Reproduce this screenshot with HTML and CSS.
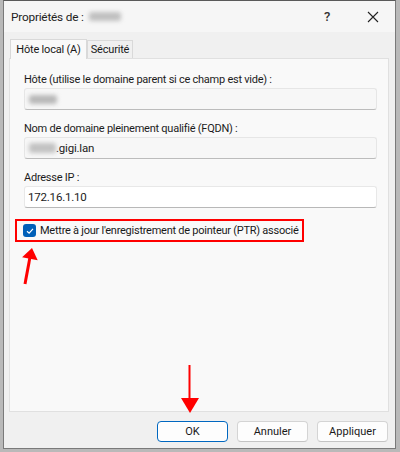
FILE: index.html
```html
<!DOCTYPE html>
<html lang="fr">
<head>
<meta charset="utf-8">
<link rel="stylesheet" href="styles.css">
</head>
<body>
<div class="window">
  <div class="titlebar">
    <span class="title">Propriétés de :</span><span class="blur blur-title"></span>
    <span class="spacer"></span>
    <span class="tbtn help">?</span>
    <span class="tbtn close"><svg width="12" height="12" viewBox="0 0 12 12"><path d="M1 1L11 11M11 1L1 11" stroke="#222" stroke-width="1.1"/></svg></span>
  </div>
  <div class="tabs">
    <div class="tab active">Hôte local (A)</div>
    <div class="tab">Sécurité</div>
  </div>
  <div class="panel">
    <div class="field">
      <div class="label">Hôte (utilise le domaine parent si ce champ est vide) :</div>
      <div class="input"><span class="blur blur-host"></span></div>
    </div>
    <div class="field">
      <div class="label">Nom de domaine pleinement qualifié (FQDN) :</div>
      <div class="input"><span class="blur blur-fqdn"></span><span>.gigi.lan</span></div>
    </div>
    <div class="field">
      <div class="label">Adresse IP :</div>
      <div class="input input-white"><span>172.16.1.10</span></div>
    </div>
    <div class="check-row">
      <span class="checkbox"><svg width="10" height="10" viewBox="0 0 10 10"><path d="M2 5.2L4.1 7.2L8 2.8" fill="none" stroke="#fff" stroke-width="1.2"/></svg></span>
      <span class="check-label">Mettre à jour l'enregistrement de pointeur (PTR) associé</span>
    </div>
    <svg class="arrow-up" width="30" height="45" viewBox="0 0 30 45"><path d="M7 39L12 12" stroke="#f00" stroke-width="3" fill="none"/><path d="M14 3L4.1 12.3L19.7 15.3Z" fill="#f00"/></svg>
    <svg class="arrow-down" width="20" height="50" viewBox="0 0 20 50"><path d="M9.5 0L9.5 34" stroke="#f00" stroke-width="2"/><path d="M1 33L19 33L10 48Z" fill="#f00"/></svg>
  </div>
  <div class="buttons">
    <div class="btn default">OK</div>
    <div class="btn">Annuler</div>
    <div class="btn">Appliquer</div>
  </div>
</div>
</body>
</html>
```

FILE: styles.css
```css
html, body {
  margin: 0;
  padding: 0;
}
body {
  width: 400px;
  height: 452px;
  background: #b9b9b9;
  font-family: Roboto, "Liberation Sans", sans-serif;
  font-size: 11px;
  color: #1a1a1a;
  overflow: hidden;
}
.window {
  box-sizing: border-box;
  width: 393px;
  height: 449px;
  margin: 0 4px 0 3px;
  border: 1px solid #7a7a7a;
  border-top: 1px solid #5a5a5a;
  background: #f0f0f0;
  display: flex;
  flex-direction: column;
}
.titlebar {
  height: 31px;
  flex: none;
  display: flex;
  align-items: center;
  padding: 0 15px 0 7px;
  background: #f6f6f6;
  font-size: 11.8px;
  letter-spacing: -0.2px;
}
.title {
  color: #222;
}
.blur {
  display: inline-block;
  background: #b5b5b5;
  filter: blur(2px);
  border-radius: 3px;
}
.blur-title {
  width: 32px;
  height: 9px;
  margin-left: 5px;
  background: #c0c0c0;
}
.spacer { flex: 1; }
.tbtn {
  display: inline-flex;
  align-items: center;
  justify-content: center;
  color: #333;
}
.help {
  font-size: 13px;
  font-weight: 500;
  margin-right: 36px;
}
.close { width: 14px; }
.tabs {
  display: flex;
  align-items: flex-end;
  padding: 5px 0 0 6px;
  height: 21px;
  flex: none;
  position: relative;
  z-index: 1;
}
.tab {
  box-sizing: border-box;
  height: 18px;
  width: 46px;
  text-align: center;
  border: 1px solid #d9d9d9;
  border-bottom: none;
  background: #f0f0f0;
  line-height: 18px;
  font-size: 11px;
  letter-spacing: -0.2px;
}
.tab.active {
  height: 20px;
  width: 77px;
  background: #f9f9f9;
  border-color: #d9d9d9;
  line-height: 19px;
  margin-bottom: -1px;
}
.panel {
  box-sizing: border-box;
  position: relative;
  margin: 0 6px 0 5px;
  height: 354px;
  flex: none;
  background: #f9f9f9;
  border: 1px solid #e0e0e0;
  padding: 13px 11px 0 14px;
}
.field {
  margin-bottom: 11px;
}
.label {
  font-size: 11px;
  letter-spacing: -0.25px;
  line-height: 15px;
  margin-bottom: 1px;
  color: #1c1c1c;
}
.input {
  box-sizing: border-box;
  height: 22px;
  background: #f7f7f7;
  border: 1px solid #e6e6e6;
  border-bottom: 1px solid #bcbcbc;
  border-radius: 3px;
  display: flex;
  align-items: center;
  padding-left: 3px;
  font-size: 11.5px;
  letter-spacing: -0.2px;
}
.input-white {
  background: #fff;
  border-color: #e8e8e8;
  border-bottom-color: #b8b8b8;
}
.blur-host {
  width: 28px;
  height: 9px;
  margin-left: 1px;
  background: #b8b8b8;
}
.blur-fqdn {
  width: 27px;
  height: 10px;
  margin-left: 1px;
  background: #c2c2c2;
}
.check-row {
  box-sizing: border-box;
  display: inline-flex;
  align-items: center;
  margin: 0 0 0 -9px;
  padding: 0 4px 0 6px;
  border: 2px solid #f00;
  height: 23px;
}
.checkbox {
  width: 13px;
  height: 13px;
  border-radius: 3px;
  background: #005fb8;
  display: inline-flex;
  align-items: center;
  justify-content: center;
  margin-right: 4px;
}
.check-label {
  font-size: 11px;
  letter-spacing: -0.25px;
  color: #1a1a1a;
  white-space: nowrap;
}
.arrow-up {
  position: absolute;
  left: 8px;
  top: 186px;
}
.arrow-down {
  position: absolute;
  left: 170px;
  top: 306px;
}
.buttons {
  display: flex;
  justify-content: flex-end;
  gap: 9px;
  padding: 9px 7px 0 0;
}
.btn {
  box-sizing: border-box;
  width: 71px;
  height: 21px;
  background: #fdfdfd;
  border: 1px solid #d4d4d4;
  border-bottom-color: #c4c4c4;
  border-radius: 4px;
  display: flex;
  align-items: center;
  justify-content: center;
  font-size: 11px;
  color: #1a1a1a;
}
.btn.default {
  border: 1px solid #0067c0;
  box-shadow: inset 0 0 0 1px #fff;
}
```
